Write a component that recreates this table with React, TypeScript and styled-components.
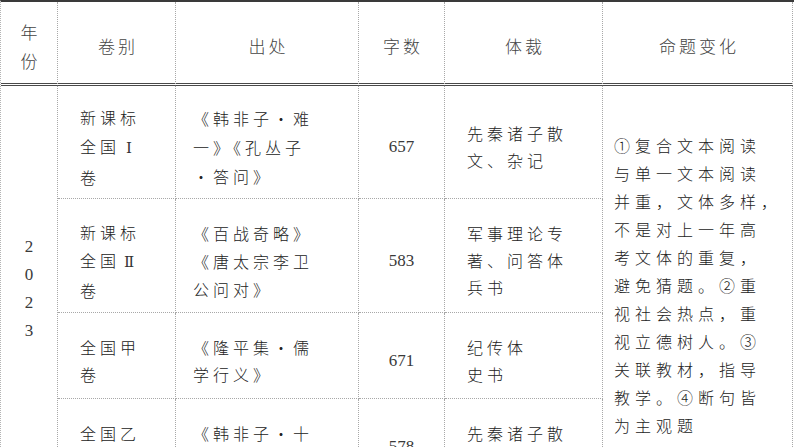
import React from "react";
import styled, { createGlobalStyle } from "styled-components";

const GlobalStyle = createGlobalStyle`
  html, body {
    margin: 0;
    padding: 0;
    background: #ffffff;
    overflow: hidden;
  }
  body {
    font-family: "Noto Sans CJK SC", "Liberation Serif", serif;
    color: #222222;
  }
`;

const cols = "57px 118px 183px 86px 158px 190px";

const Table = styled.div`
  display: grid;
  grid-template-columns: ${cols};
  grid-template-rows: 84px 113px 114px 86px 86px;
  width: 793px;
  border-top: 2px solid #3a3a3a;
  border-left: 1px dotted #b4b4b4;
`;

const HeadCell = styled.div`
  display: flex;
  flex-direction: column;
  align-items: center;
  justify-content: center;
  padding-top: 6px;
  box-sizing: border-box;
  border-right: 1px dotted #a8a8a8;
  border-bottom: 3px double #4a4a4a;
  font-size: 17px;
  font-weight: 300;
  line-height: 29px;
  color: #444444;
  letter-spacing: 3px;
  text-indent: 3px;
`;

const Cell = styled.div<{ $pad?: number; $center?: boolean; $lh?: number; $row?: string }>`
  display: flex;
  flex-direction: column;
  justify-content: center;
  align-items: ${(p) => (p.$center ? "center" : "flex-start")};
  box-sizing: border-box;
  padding: 10px 0 0 ${(p) => p.$pad ?? 0}px;
  border-right: 1px dotted #a8a8a8;
  border-bottom: 1px dotted #a8a8a8;
  font-size: 16px;
  font-weight: 300;
  line-height: ${(p) => p.$lh ?? 28}px;
  letter-spacing: 4px;
  white-space: nowrap;
  ${(p) => (p.$row ? `grid-row: ${p.$row};` : "")}
`;

const NumCell = styled(Cell)`
  font-family: "Liberation Serif", "Noto Sans CJK SC", serif;
  font-weight: 400;
  font-size: 17px;
  letter-spacing: 0;
  color: #3a3a3a;
`;

const YearCell = styled(NumCell)`
  grid-column: 1;
  padding-top: 8px;
  font-size: 17px;
  line-height: 28px;
  color: #3a3a3a;
`;

const NoteCell = styled(Cell)`
  grid-column: 6;
  padding: 0 0 0 11px;
  letter-spacing: 5px;
  font-size: 16px;
  line-height: 28px;
`;

const Line = styled.span`
  display: block;
`;

const Roman = styled.span`
  display: inline-block;
  width: 18px;
  text-align: center;
  font-family: "DejaVu Serif", "Liberation Serif", serif;
  font-size: 15px;
  letter-spacing: 0;
  color: #333333;
`;

const header = ["卷别", "出处", "字数", "体裁", "命题变化"];

type Row = {
  paper: React.ReactNode[];
  source: string[];
  count: string;
  genre: string[];
  lh: number;
};

const rows: Row[] = [
  {
    paper: ["新课标", <>全国<Roman>Ⅰ</Roman></>, "卷"],
    source: ["《韩非子·难", "一》《孔丛子", "·答问》"],
    count: "657",
    genre: ["先秦诸子散", "文、杂记"],
    lh: 29,
  },
  {
    paper: ["新课标", <>全国<Roman>Ⅱ</Roman></>, "卷"],
    source: ["《百战奇略》", "《唐太宗李卫", "公问对》"],
    count: "583",
    genre: ["军事理论专", "著、问答体", "兵书"],
    lh: 28,
  },
  {
    paper: ["全国甲", "卷"],
    source: ["《隆平集·儒", "学行义》"],
    count: "671",
    genre: ["纪传体", "史书"],
    lh: 27,
  },
  {
    paper: ["全国乙", "卷"],
    source: ["《韩非子·十", "过》"],
    count: "578",
    genre: ["先秦诸子散", "文"],
    lh: 27,
  },
];

const notes = [
  "①复合文本阅读",
  "与单一文本阅读",
  "并重，文体多样，",
  "不是对上一年高",
  "考文体的重复，",
  "避免猜题。②重",
  "视社会热点，重",
  "视立德树人。③",
  "关联教材，指导",
  "教学。④断句皆",
  "为主观题",
];

const Lines = ({ items }: { items: React.ReactNode[] }) => (
  <>
    {items.map((t, i) => (
      <Line key={i}>{t}</Line>
    ))}
  </>
);

export default function App() {
  return (
    <>
      <GlobalStyle />
      <Table>
        <HeadCell>
          <Line>年</Line>
          <Line>份</Line>
        </HeadCell>
        {header.map((h) => (
          <HeadCell key={h}>{h}</HeadCell>
        ))}
        <YearCell $center $row="2 / span 4">
          <Lines items={["2", "0", "2", "3"]} />
        </YearCell>
        {rows.map((r, i) => (
          <React.Fragment key={i}>
            <Cell $pad={22} $lh={r.lh} $row={`${i + 2}`}>
              <Lines items={r.paper} />
            </Cell>
            <Cell $pad={17} $lh={r.lh} $row={`${i + 2}`}>
              <Lines items={r.source} />
            </Cell>
            <NumCell $center $row={`${i + 2}`}>{r.count}</NumCell>
            <Cell $pad={22} $lh={27} $row={`${i + 2}`}>
              <Lines items={r.genre} />
            </Cell>
            {i === 0 && (
              <NoteCell $row="2 / span 4">
                <Lines items={notes} />
              </NoteCell>
            )}
          </React.Fragment>
        ))}
      </Table>
    </>
  );
}
